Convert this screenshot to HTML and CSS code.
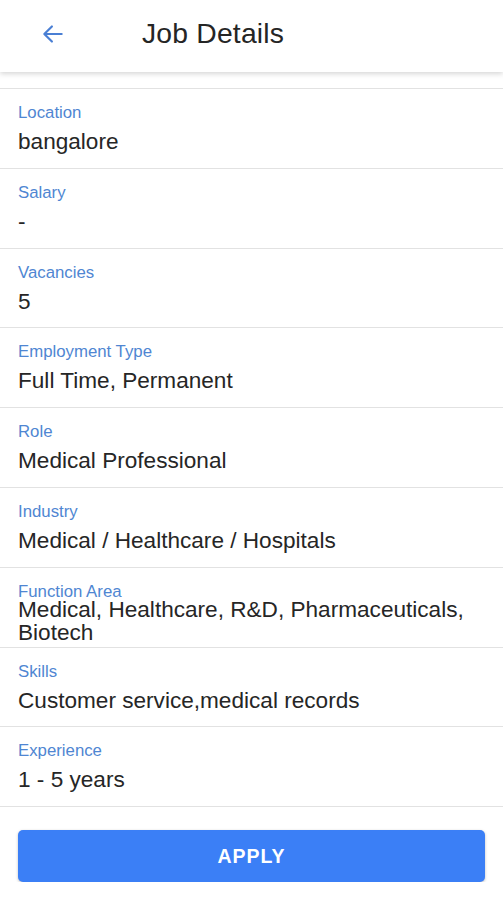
FILE: index.html
```html
<!DOCTYPE html>
<html lang="en">
<head>
<meta charset="utf-8">
<title>Job Details</title>
<link rel="stylesheet" href="styles.css">
</head>
<body>
<header class="topbar">
  <button class="back" aria-label="Back">
    <svg width="26" height="26" viewBox="0 0 24 24"><path d="M20 12H5M11 5l-7 7 7 7" fill="none" stroke="#4a7fd4" stroke-width="2" stroke-linecap="round" stroke-linejoin="round"/></svg>
  </button>
  <h1 class="title">Job Details</h1>
</header>
<main class="content">
  <ul class="details">
    <li class="row"><span class="label">Location</span><span class="value">bangalore</span></li>
    <li class="row"><span class="label">Salary</span><span class="value">-</span></li>
    <li class="row"><span class="label">Vacancies</span><span class="value">5</span></li>
    <li class="row"><span class="label">Employment Type</span><span class="value">Full Time, Permanent</span></li>
    <li class="row"><span class="label">Role</span><span class="value">Medical Professional</span></li>
    <li class="row"><span class="label">Industry</span><span class="value">Medical / Healthcare / Hospitals</span></li>
    <li class="row row-tight"><span class="label">Function Area</span><span class="value">Medical, Healthcare, R&amp;D, Pharmaceuticals, Biotech</span></li>
    <li class="row"><span class="label">Skills</span><span class="value">Customer service,medical records</span></li>
    <li class="row"><span class="label">Experience</span><span class="value">1 - 5 years</span></li>
  </ul>
  <div class="actions">
    <button class="apply">APPLY</button>
  </div>
</main>
</body>
</html>
```
FILE: styles.css
```css
* { box-sizing: border-box; }
html, body { margin: 0; padding: 0; background: #fff; }
body { font-family: "Liberation Sans", Arial, sans-serif; color: #222; }

.topbar {
  height: 72px;
  padding-bottom: 5px;
  display: flex;
  align-items: center;
  background: #fff;
  box-shadow: 0 2px 5px rgba(0,0,0,0.16);
  position: relative;
  z-index: 1;
}
.back {
  border: 0;
  background: none;
  padding: 0;
  margin-left: 39px;
  width: 28px;
  height: 28px;
  display: flex;
  align-items: center;
  justify-content: center;
}
.title {
  margin: 0 0 0 75px;
  font-size: 28.3px;
  font-weight: 400;
  color: #252525;
  letter-spacing: 0.2px;
}

.content { padding-top: 16px; }

.details {
  list-style: none;
  margin: 0;
  padding: 0;
  border-top: 1px solid #e2e2e2;
}
.row {
  height: 79.8px;
  border-bottom: 1px solid #e2e2e2;
  padding: 14px 18px 0;
  display: flex;
  flex-direction: column;
  overflow: visible;
}
.label {
  font-size: 16.8px;
  line-height: 19px;
  color: #4f86d2;
}
.value {
  font-size: 22.6px;
  line-height: 24px;
  margin-top: 8px;
  color: #262626;
}
.row-tight .value {
  margin-top: -3px;
  line-height: 23px;
}

.actions { padding: 23px 18px 0; }
.apply {
  width: 100%;
  height: 52px;
  border: 0;
  border-radius: 5px;
  background: #3b7ff6;
  color: #fff;
  font-family: "Liberation Sans", Arial, sans-serif;
  font-weight: 700;
  font-size: 19.5px;
  letter-spacing: 1px;
  box-shadow: 0 1px 3px rgba(0,0,0,0.25);
}
```
